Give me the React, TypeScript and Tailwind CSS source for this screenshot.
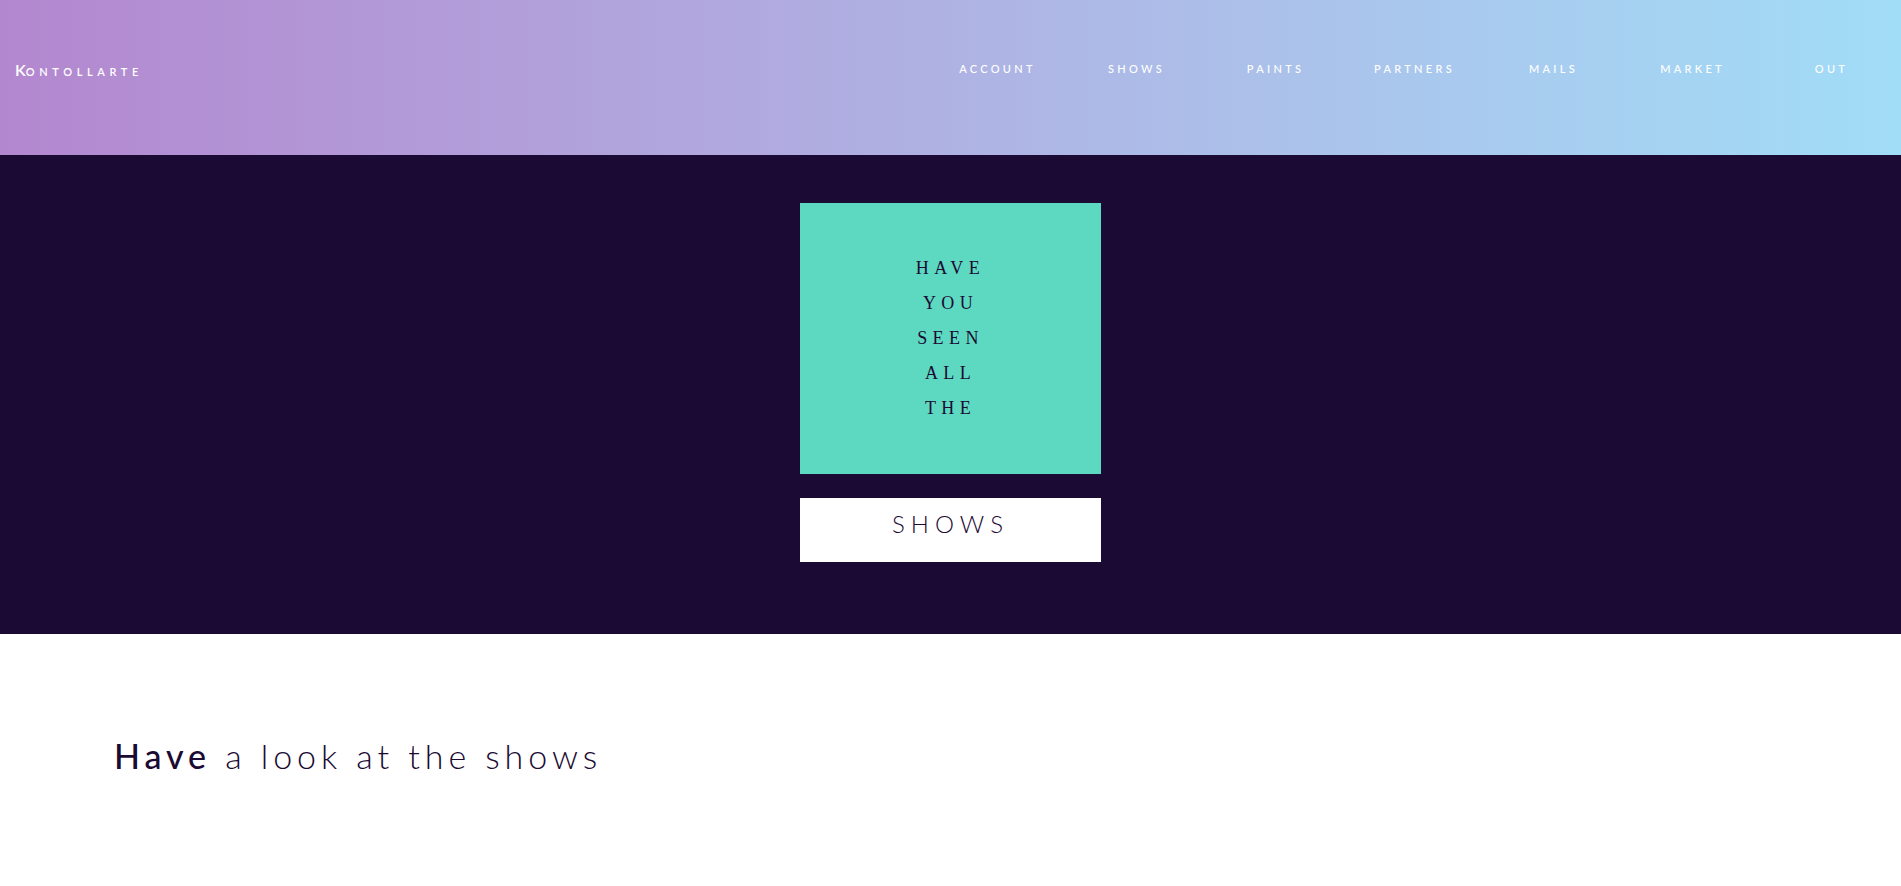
const links = ['Account', 'Shows', 'Paints', 'Partners', 'Mails', 'Market', 'Out'];

const words = ['Have', 'You', 'Seen', 'All', 'The'];

export default function App() {
  return (
    <div className="min-h-[886px] bg-white font-['Lato',sans-serif] text-[#1b0a33]">
      <header className="flex h-[155px] items-center justify-between bg-gradient-to-r from-[#b387cf] to-[#a1ddf7] pb-[16px]">
        <div className="pl-[15px] font-semibold uppercase text-white">
          <span className="text-[16px]">K</span>
          <span className="text-[11px] tracking-[0.42em]">ontollarte</span>
        </div>
        <nav className="flex">
          {links.map((l) => (
            <a
              key={l}
              href="#"
              className="w-[139px] text-center text-[11px] font-medium uppercase tracking-[0.3em] text-white"
            >
              {l}
            </a>
          ))}
        </nav>
      </header>

      <section className="flex h-[479px] flex-col items-center bg-[#1b0a33] pt-[48px]">
        <div className="flex h-[271px] w-[301px] flex-col items-center bg-[#5dd9c1] pt-[48px] font-['Liberation_Serif',serif] text-[18px] uppercase leading-[35px] tracking-[0.3em]">
          {words.map((w) => (
            <span key={w}>{w}</span>
          ))}
        </div>
        <div className="mt-[24px] flex h-[64px] w-[301px] justify-center bg-white pt-[8px] text-[24px] font-light uppercase tracking-[0.25em]">
          <span>Shows</span>
        </div>
      </section>

      <section className="px-[114px] pt-[96px]">
        <h2 className="text-[34px] font-light tracking-[0.145em]">
          <span className="font-medium">Have</span> a look at the shows
        </h2>
      </section>
    </div>
  );
}
